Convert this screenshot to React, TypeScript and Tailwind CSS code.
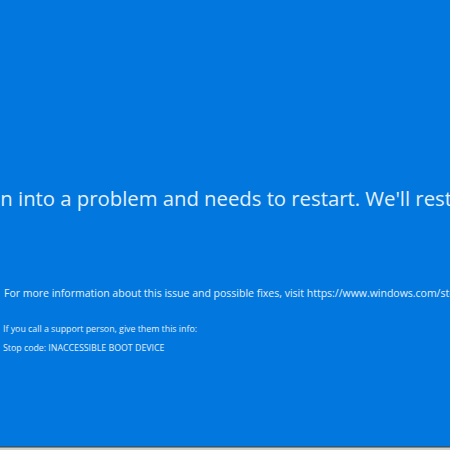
const App = () => {
  return (
    <div
      className="w-[450px] h-[450px] flex flex-col overflow-hidden bg-[#cfd0c9]"
      style={{ fontFamily: '"Open Sans", "Noto Sans", sans-serif' }}
    >
      <div className="h-[446px] bg-[#0277dd] text-[#e2f0fc] overflow-hidden pt-[186px]">
        <p className="ml-[-99px] whitespace-nowrap text-[20.3px] leading-[24px]">
          Your PC ran into a problem and needs to restart. We'll restart for you.
        </p>
        <p className="mt-[76px] ml-[4px] whitespace-nowrap text-[10.5px] leading-[14px]">
          For more information about this issue and possible fixes, visit
          https://www.windows.com/stopcode
        </p>
        <p className="mt-[23px] ml-[3px] whitespace-nowrap text-[8.8px] leading-[12px]">
          If you call a support person, give them this info:
        </p>
        <p className="mt-[7px] ml-[3px] whitespace-nowrap text-[8.8px] leading-[12px]">
          Stop code: INACCESSIBLE BOOT DEVICE
        </p>
      </div>
      <div className="h-[1px] bg-[#2f5877]" />
      <div className="h-[1px] bg-[#7d8a92]" />
    </div>
  );
};

export default App;
